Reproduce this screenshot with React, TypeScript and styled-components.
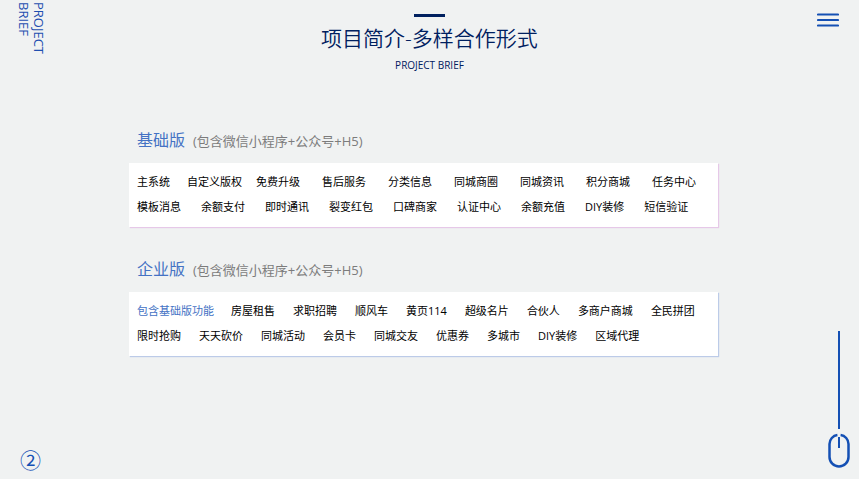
import React from "react";
import styled, { createGlobalStyle } from "styled-components";

type Tone = "violet" | "blue";
type Spacing = "tight" | "snug" | "normal" | "wide" | "loose";

const spacing: Record<Spacing, string> = {
  tight: "14px",
  snug: "17px",
  normal: "18px",
  wide: "20px",
  loose: "22px",
};

const edge: Record<Tone, string> = {
  violet: "#e6c8e8",
  blue: "#bccbe8",
};

const GlobalStyle = createGlobalStyle`
  body {
    margin: 0;
    background: #f0f2f2;
    font-family: "Open Sans", "Noto Sans CJK SC", sans-serif;
  }
`;

const Page = styled.div`
  display: grid;
  grid-template-columns: 129px minmax(0, 1fr) 141px;
  grid-template-rows: auto 1fr;
  min-height: 100vh;
`;

const Header = styled.header`
  grid-column: 1 / -1;
  display: grid;
  grid-template-columns: 1fr auto 1fr;
  align-items: start;
`;

const SideLabel = styled.div`
  writing-mode: vertical-rl;
  justify-self: start;
  padding: 2px 0 0 16px;
  color: #1f4fb0;
  font-size: 13px;
  line-height: 15px;
`;

const Heading = styled.div`
  display: flex;
  flex-direction: column;
  align-items: center;
  padding-top: 14px;
  color: #00205f;
`;

const Bar = styled.div`
  width: 31px;
  height: 3px;
  background: #00205f;
`;

const Title = styled.h1`
  margin: 5px 0 0;
  font-size: 21px;
  font-weight: 350;
  line-height: 32px;
`;

const Subtitle = styled.p`
  margin: 0;
  font-size: 10px;
  line-height: 22px;
`;

const MenuButton = styled.button`
  justify-self: end;
  display: flex;
  margin: 12px 20px 0 0;
  padding: 0;
  border: 0;
  background: none;
  cursor: pointer;
`;

const Main = styled.main`
  display: flex;
  flex-direction: column;
  gap: 29px;
  padding-top: 51px;
`;

const PlanHeading = styled.h2`
  display: flex;
  align-items: baseline;
  gap: 8px;
  margin: 0 0 9px;
  padding-left: 8px;
  color: #4472c4;
  font-size: 16px;
  font-weight: 400;
  line-height: 26px;
`;

const PlanNote = styled.span`
  color: #7c7c7c;
  font-size: 13px;
`;

const Card = styled.div<{ $tone: Tone }>`
  padding: 6px 8px 8px;
  background: #fff;
  box-shadow: 1px 1px 1px ${({ $tone }) => edge[$tone]};
`;

const FeatureRow = styled.ul`
  display: flex;
  margin: 0;
  padding: 0;
  list-style: none;
  font-size: 11px;
  line-height: 25px;
  white-space: nowrap;
`;

const Feature = styled.li<{ $after: Spacing; $accent?: boolean }>`
  margin-right: ${({ $after }) => spacing[$after]};
  color: ${({ $accent }) => ($accent ? "#4472c4" : "#000")};
`;

const PageNumber = styled.div`
  grid-column: 1;
  grid-row: 2;
  align-self: end;
  padding: 0 0 8px 20px;
  color: #1450b4;
  font-family: "Noto Sans CJK SC", sans-serif;
  font-size: 21px;
  font-weight: 400;
  line-height: 24px;
`;

const ScrollHint = styled.div`
  grid-column: 3;
  grid-row: 2;
  place-self: end;
  display: flex;
  padding: 0 8px 10px 0;
`;

interface FeatureItem {
  name: string;
  after?: Spacing;
  accent?: boolean;
}

interface Plan {
  name: string;
  tone: Tone;
  rows: { after: Spacing; items: FeatureItem[] }[];
}

const plain = (names: string): FeatureItem[] =>
  names.split(" ").map((name) => ({ name }));

const plans: Plan[] = [
  {
    name: "基础版",
    tone: "violet",
    rows: [
      {
        after: "loose",
        items: [
          { name: "主系统", after: "snug" },
          { name: "自定义版权", after: "tight" },
          ...plain("免费升级 售后服务 分类信息 同城商圈 同城资讯 积分商城 任务中心"),
        ],
      },
      {
        after: "wide",
        items: plain(
          "模板消息 余额支付 即时通讯 裂变红包 口碑商家 认证中心 余额充值 DIY装修 短信验证"
        ),
      },
    ],
  },
  {
    name: "企业版",
    tone: "blue",
    rows: [
      {
        after: "normal",
        items: [
          { name: "包含基础版功能", accent: true, after: "snug" },
          ...plain("房屋租售 求职招聘 顺风车 黄页114 超级名片 合伙人 多商户商城 全民拼团"),
        ],
      },
      {
        after: "normal",
        items: plain(
          "限时抢购 天天砍价 同城活动 会员卡 同城交友 优惠券 多城市 DIY装修 区域代理"
        ),
      },
    ],
  },
];

export default function App() {
  return (
    <Page>
      <GlobalStyle />
      <Header>
        <SideLabel>
          PROJECT
          <br />
          BRIEF
        </SideLabel>
        <Heading>
          <Bar />
          <Title>项目简介-多样合作形式</Title>
          <Subtitle>PROJECT BRIEF</Subtitle>
        </Heading>
        <MenuButton type="button" aria-label="菜单">
          <svg width="22" height="16" viewBox="0 0 22 16" aria-hidden="true">
            <path
              d="M1 2.5h20M1 8h20M1 13.5h20"
              stroke="#1450b4"
              strokeWidth="2.2"
              strokeLinecap="round"
            />
          </svg>
        </MenuButton>
      </Header>
      <Main>
        {plans.map((plan) => (
          <section key={plan.name}>
            <PlanHeading>
              {plan.name}
              <PlanNote>(包含微信小程序+公众号+H5)</PlanNote>
            </PlanHeading>
            <Card $tone={plan.tone}>
              {plan.rows.map((row, index) => (
                <FeatureRow key={index}>
                  {row.items.map((item) => (
                    <Feature
                      key={item.name}
                      $after={item.after ?? row.after}
                      $accent={item.accent}
                    >
                      {item.name}
                    </Feature>
                  ))}
                </FeatureRow>
              ))}
            </Card>
          </section>
        ))}
      </Main>
      <PageNumber>②</PageNumber>
      <ScrollHint>
        <svg width="24" height="139" viewBox="0 0 24 139" fill="none" stroke="#1450b4" aria-hidden="true">
          <path d="M12 1v98M12 107v11" strokeWidth="2" />
          <path
            d="M10.4 105C6 105.6 2.5 109.5 2.5 114v13a9.5 9.5 0 0 0 19 0v-13c0-4.5-3.5-8.4-7.9-9"
            strokeWidth="2.5"
          />
        </svg>
      </ScrollHint>
    </Page>
  );
}
